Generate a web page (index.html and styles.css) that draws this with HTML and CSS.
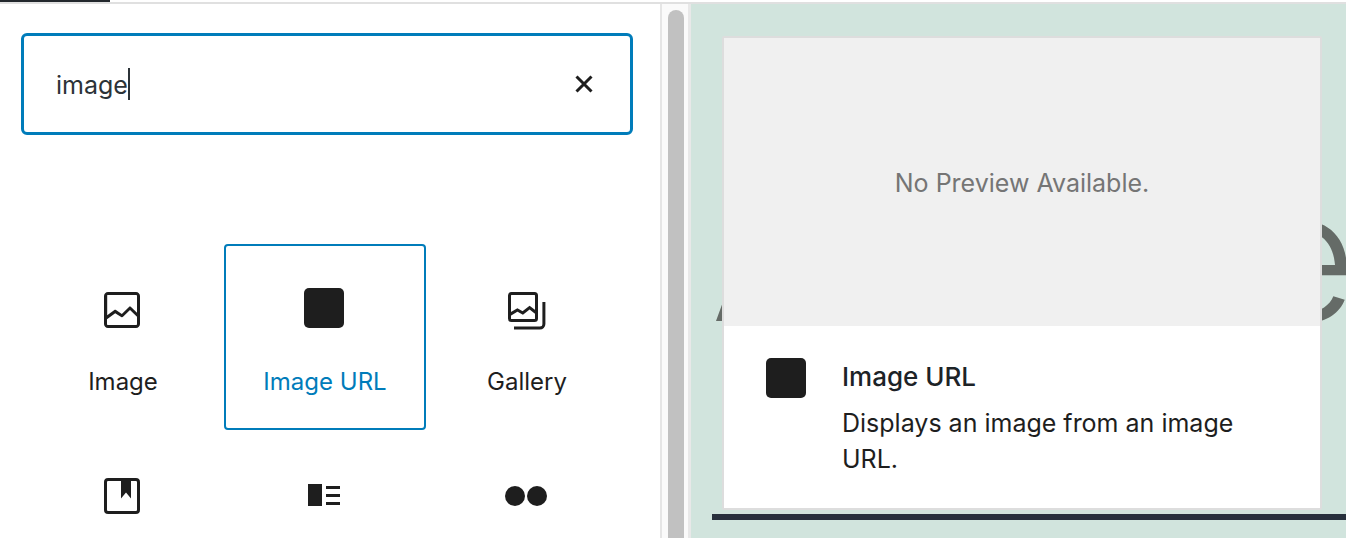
FILE: index.html
```
<!DOCTYPE html>
<html lang="en">
<head>
    <meta charset="UTF-8">
    <meta name="viewport" content="width=device-width, initial-scale=1.0">
    <title>Block inserter</title>
    <link rel="stylesheet" href="styles.css">
</head>
<body>
    <header class="topbar"><div class="topbar-logo"></div></header>

    <div class="editor">
        <aside class="inserter">
            <div class="search">
                <input class="search-input" type="text" value="image" aria-label="Search for a block">
                <span class="caret"></span>
                <button class="search-clear" type="button" aria-label="Clear search">
                    <svg viewBox="0 0 24 24" width="24" height="24"><path d="M4.500 4.500l15 15M19.500 4.500l-15 15" fill="none" stroke="currentColor" stroke-width="3"/></svg>
                </button>
            </div>

            <div class="blocks">
                <button class="block" type="button">
                    <svg class="icon" viewBox="0 0 24 24"><path d="M19 3H5c-1.1 0-2 .9-2 2v14c0 1.1.9 2 2 2h14c1.1 0 2-.9 2-2V5c0-1.1-.9-2-2-2zM5 4.5h14c.3 0 .5.2.5.5v8.4l-3-2.9c-.3-.3-.8-.3-1 0L11.9 14 9 12c-.3-.2-.6-.2-.8 0l-3.6 2.6V5c-.1-.3.1-.5.4-.5zm14 15H5c-.3 0-.5-.2-.5-.5v-2.4l4.1-3 3 1.9c.3.2.7.2.9-.1L16 12l3.5 3.4V19c0 .3-.2.5-.5.5z"/></svg>
                    <span class="block-title">Image</span>
                </button>
                <button class="block active" type="button">
                    <svg class="icon" viewBox="0 0 24 24"><rect x="2" y="1" width="20" height="20" rx="2.5"/></svg>
                    <span class="block-title">Image URL</span>
                </button>
                <button class="block" type="button">
                    <svg class="icon" viewBox="0 0 24 24"><g fill="none" stroke="currentColor" stroke-width="1.5"><rect x="3.75" y="3.75" width="13.5" height="13.5" rx="1"/><path d="M4 14.2l3.7-2.2 2.7 1.5 3.4-2.7 3.3 2.6"/><path d="M20.95 8v11a2 2 0 0 1-2 2H6"/></g></svg>
                    <span class="block-title">Gallery</span>
                </button>
                <button class="block" type="button" aria-label="Cover">
                    <svg class="icon" viewBox="0 0 24 24"><rect x="3.75" y="3.75" width="16.5" height="16.5" rx="1.3" fill="none" stroke="currentColor" stroke-width="1.5"/><path d="M11.5 4h5v9.3L14 10.3l-2.5 3z"/></svg>
                </button>
                <button class="block" type="button" aria-label="Media &amp; Text">
                    <svg class="icon" viewBox="0 0 24 24"><path d="M4 6h7v11H4zM13 7h7v1.5h-7zM13 11h7v1.5h-7zM13 15h7v1.5h-7z"/></svg>
                </button>
                <button class="block" type="button" aria-label="Flickr">
                    <svg class="icon" viewBox="0 0 24 24"><circle cx="6.5" cy="12" r="5"/><circle cx="17.5" cy="12" r="5"/></svg>
                </button>
            </div>
        </aside>

        <div class="scrollbar"><div class="thumb"></div></div>

        <main class="canvas">
            <div class="post-title" aria-hidden="true"><span>A</span><span>e</span></div>

            <section class="preview-card">
                <div class="preview-empty">No Preview Available.</div>
                <div class="preview-info">
                    <svg class="icon" viewBox="0 0 24 24"><rect x="2" y="2" width="20" height="20" rx="2.5"/></svg>
                    <div class="preview-text">
                        <h2>Image URL</h2>
                        <p>Displays an image from an image URL.</p>
                    </div>
                </div>
            </section>

            <hr class="separator">
        </main>
    </div>
</body>
</html>
```
FILE: styles.css
```
* {
    box-sizing: border-box;
}
body {
    margin: 0;
    height: 100vh;
    display: flex;
    flex-direction: column;
    overflow: hidden;
    font-family: Inter, "Liberation Sans", sans-serif;
    color: #1e1e1e;
    background: #fff;
}
.topbar {
    flex: none;
    border-bottom: 2px solid #e0e0e0;
}
.topbar-logo {
    width: 110px;
    height: 2px;
    background: #23282d;
}
.editor {
    flex: 1;
    min-height: 0;
    display: flex;
}

/* inserter sidebar */
.inserter {
    flex: none;
    width: 662px;
    padding: 29px 27px 0 21px;
    border-right: 2px solid #e5e5e5;
    overflow: hidden;
}
.search {
    position: relative;
    display: flex;
    align-items: center;
    height: 102px;
    padding: 0 34px 0 32px;
    border: 3px solid #007cba;
    border-radius: 6px;
}
.search-input {
    flex: 1;
    min-width: 0;
    padding: 2px 0 0;
    border: none;
    outline: none;
    background: none;
    font: 25px/32px Inter, "Liberation Sans", sans-serif;
    color: #2c3338;
}
.caret {
    position: absolute;
    left: 104px;
    top: 32px;
    width: 2px;
    height: 32px;
    background: #2c3338;
}
.search-clear {
    display: flex;
    padding: 0;
    border: none;
    background: none;
    color: #1e1e1e;
    cursor: pointer;
}
.blocks {
    display: grid;
    grid-template-columns: repeat(3, 1fr);
    margin: 109px 5px 0 1px;
}
.block {
    display: flex;
    flex-direction: column;
    align-items: center;
    gap: 32px;
    height: 186px;
    padding: 40px 0 0;
    border: 2px solid transparent;
    border-radius: 4px;
    background: none;
    font: 24px/32px Inter, "Liberation Sans", sans-serif;
    color: #1e1e1e;
    cursor: pointer;
}
.block.active {
    border-color: #007cba;
}
.block.active .block-title {
    color: #007cba;
}
.icon {
    flex: none;
    width: 48px;
    height: 48px;
    fill: currentColor;
}
.block .icon {
    margin-right: 2px;
}
.scrollbar {
    flex: none;
    width: 29px;
    padding: 6px 5px 0 6px;
    border-right: 3px solid #e8e8e8;
    background: #fafafa;
}
.thumb {
    width: 16px;
    height: 100%;
    border-radius: 8px 8px 0 0;
    background: #c1c1c1;
}

/* editor canvas */
.canvas {
    position: relative;
    flex: 1;
    min-width: 0;
    padding: 32px 0 0 31px;
    overflow: hidden;
    background: #d1e4dd;
}
.post-title {
    position: absolute;
    left: 20px;
    top: 137px;
    display: flex;
    gap: 420px;
    font-size: 180px;
    line-height: 230px;
    font-weight: 350;
    color: #656b67;
}
.preview-card {
    position: relative;
    width: 600px;
    border: 2px solid #ddd;
    border-radius: 2px;
    background: #fff;
}
.preview-empty {
    display: flex;
    align-items: center;
    justify-content: center;
    height: 288px;
    padding-top: 2px;
    background: #f0f0f0;
    font-size: 25px;
    color: #757575;
}
.preview-info {
    display: flex;
    gap: 32px;
    padding: 28px 38px 31px;
}
.preview-text h2 {
    margin: 6px 0 11px;
    font-size: 26px;
    line-height: 34px;
    font-weight: 500;
    color: #1d2327;
}
.preview-text p {
    margin: 0;
    font-size: 25px;
    line-height: 36px;
}
.separator {
    margin: 4px 0 0 -10px;
    border: none;
    height: 6px;
    background: #28303d;
}
```
